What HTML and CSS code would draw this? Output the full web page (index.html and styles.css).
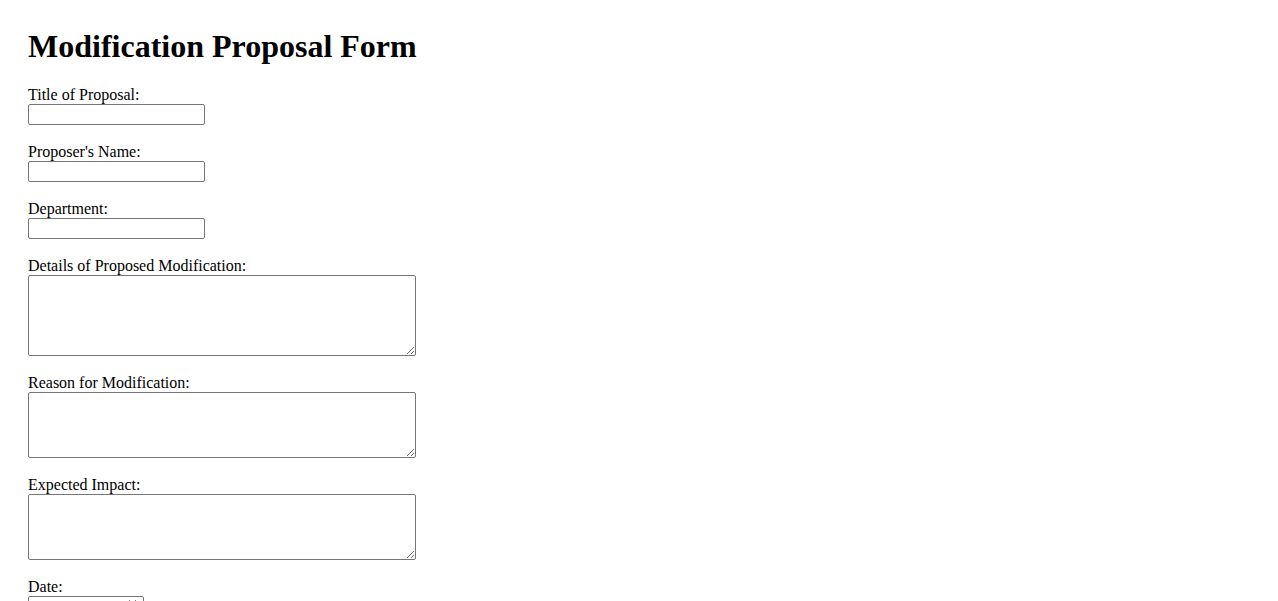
FILE: index.html
```html
<!DOCTYPE html>
<html lang="en">
<head>
<meta charset="UTF-8">
<meta name="viewport" content="width=device-width, initial-scale=1.0">
<title>Modification Proposal Form</title>
<link rel="stylesheet" href="styles.css">
</head>
<body>
  <h1 class="form-title">Modification Proposal Form</h1>

  <form class="proposal-form">
    <div class="field">
      <label class="field-label" for="title">Title of Proposal:</label>
      <input class="text-input" type="text" id="title" name="title">
    </div>

    <div class="field">
      <label class="field-label" for="proposer">Proposer's Name:</label>
      <input class="text-input" type="text" id="proposer" name="proposer">
    </div>

    <div class="field">
      <label class="field-label" for="department">Department:</label>
      <input class="text-input" type="text" id="department" name="department">
    </div>

    <div class="field">
      <label class="field-label" for="details">Details of Proposed Modification:</label>
      <textarea class="text-area tall" id="details" name="details"></textarea>
    </div>

    <div class="field">
      <label class="field-label" for="reason">Reason for Modification:</label>
      <textarea class="text-area" id="reason" name="reason"></textarea>
    </div>

    <div class="field">
      <label class="field-label" for="impact">Expected Impact:</label>
      <textarea class="text-area" id="impact" name="impact"></textarea>
    </div>

    <div class="field">
      <label class="field-label" for="date">Date:</label>
      <input class="date-input" type="date" id="date" name="date">
    </div>
  </form>
</body>
</html>
```

FILE: styles.css
```css
* {
  box-sizing: border-box;
}

body {
  margin: 0;
  padding: 28px;
  font-family: 'Liberation Serif', 'Times New Roman', serif;
  font-size: 16px;
  color: #000;
  background-color: #fff;
}

.form-title {
  font-size: 32px;
  font-weight: bold;
  margin: 0 0 21px;
}

/* Form fields */
.field {
  margin-bottom: 18px;
}

.field-label {
  display: block;
  height: 18px;
  line-height: 18px;
}

.text-input,
.text-area,
.date-input {
  display: block;
  margin: 0;
  border: 1px solid #767676;
  border-radius: 2px;
  background-color: #fff;
  font-family: 'Liberation Sans', Arial, sans-serif;
  font-size: 13px;
}

.text-input {
  width: 177px;
  height: 21px;
  padding: 1px 2px;
}

.text-area {
  width: 388px;
  height: 66px;
  padding: 2px;
}

.text-area.tall {
  height: 81px;
}

.date-input {
  width: 116px;
  height: 21px;
  padding: 1px 2px;
}
```
